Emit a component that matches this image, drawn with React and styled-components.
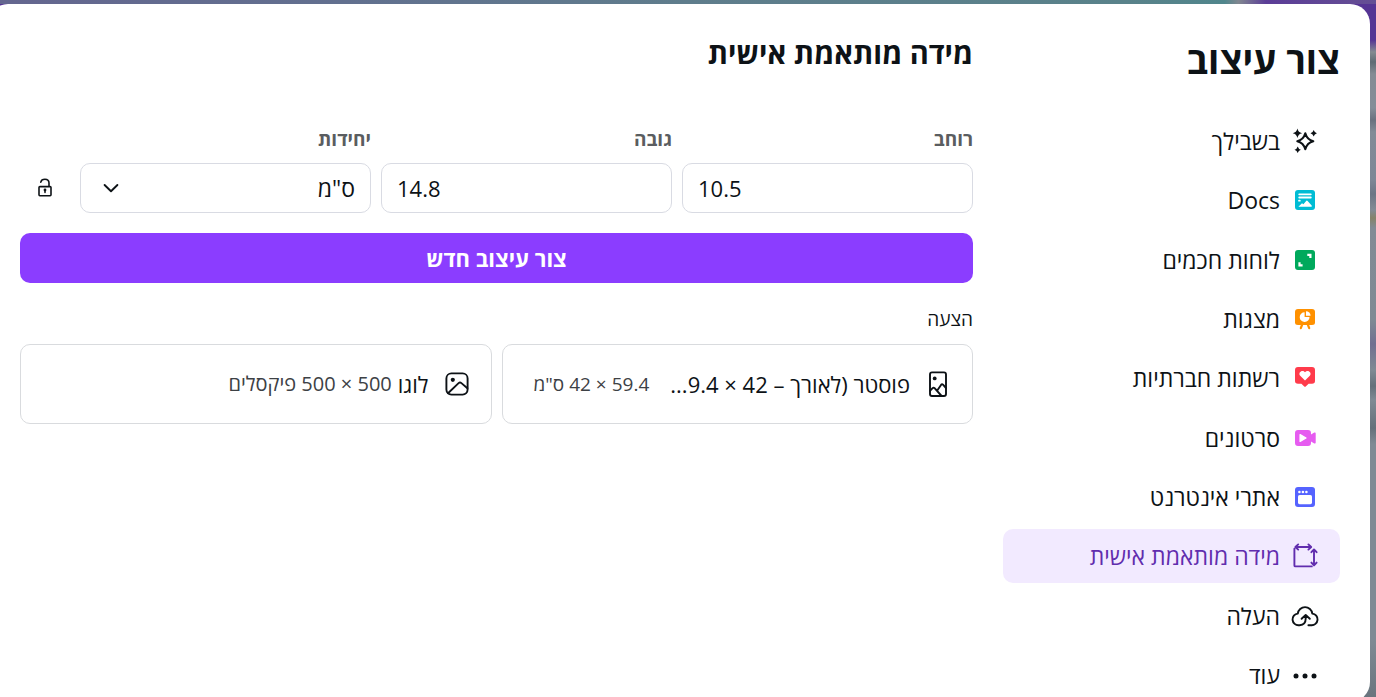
import React, { useState } from 'react';
import styled, { createGlobalStyle } from 'styled-components';

const GlobalStyle = createGlobalStyle`
  *, *::before, *::after {
    box-sizing: border-box;
  }

  body {
    margin: 0;
    overflow: hidden;
    color: #0d1216;
    font-family: 'Open Sans', 'Noto Sans', sans-serif;
    font-size: 22px;
    line-height: 30px;
  }

  button, input, select {
    color: inherit;
    font: inherit;
  }
`;

const Backdrop = styled.div`
  min-height: 100vh;
  padding: 4px 6px 0 0;
  background:
    linear-gradient(90deg, #64668f 0%, #62708f 25%, #5f7d8c 50%, #59828a 82%, #50868c 89%, #808790 90%, #5b3d97 92%, #654f94 100%) top / 100% 4px no-repeat,
    linear-gradient(180deg, #553494 0, #553494 40px, #848b91 52px, #5f6b74 62px, #848b94 74px, #848d98 108px, #69717f 120px, #828b97 132px, #7d8796 180px, #6c7585 194px, #828b95 210px, #85836a 218px, #828b95 228px, #7f8a94 320px, #716f90 344px, #7f8a94 370px, #64707a 386px, #7f8a94 400px, #64707a 428px, #7f8a94 444px, #7f8a94 640px, #69757e 697px);
`;

const Panel = styled.div`
  display: flex;
  gap: 30px;
  min-height: calc(100vh + 1px);
  margin-left: -12px;
  padding: 0 30px 0 32px;
  border-radius: 20px;
  background: white;
`;

const Sidebar = styled.aside`
  display: flex;
  flex: 0 0 337px;
  flex-direction: column;
`;

const PageTitle = styled.h1`
  margin: 32px 0 30px;
  font-size: 37px;
  font-weight: 700;
  line-height: 48px;
`;

const Nav = styled.nav`
  display: flex;
  flex: 1;
  flex-direction: column;
  justify-content: space-between;
`;

const NavItem = styled.a`
  display: flex;
  align-items: center;
  gap: 10px;
  height: 54px;
  padding: 0 20px;
  border-radius: 10px;
  background: ${props => props.$active ? '#f2eaff' : 'transparent'};
  color: ${props => props.$active ? '#612dae' : 'inherit'};
  font-size: 23px;
  text-decoration: none;
`;

const Main = styled.main`
  flex: 1;
  min-width: 0;
`;

const SectionTitle = styled.h2`
  margin: 30px 0 53px;
  font-size: 29px;
  font-weight: 700;
  line-height: 38px;
`;

const SizeForm = styled.form`
  display: grid;
  grid-template-columns: 1fr 1fr 1fr 50px;
  align-items: end;
  gap: 20px 10px;
`;

const Field = styled.div`
  display: flex;
  flex-direction: column;
  gap: 10px;
`;

const Label = styled.label`
  color: #5a5d60;
  font-size: 19px;
  font-weight: 700;
  line-height: 28px;
`;

const Input = styled.input`
  width: 100%;
  height: 50px;
  padding: 0 15px;
  border: 1px solid #d9dbe3;
  border-radius: 10px;
  background: white;
`;

const SelectWrap = styled.div`
  position: relative;

  svg {
    position: absolute;
    top: 15px;
    left: 21px;
    pointer-events: none;
  }
`;

const Select = styled(Input).attrs({ as: 'select' })`
  display: block;
  appearance: none;
  font-size: 23px;
`;

const LockButton = styled.button`
  display: flex;
  align-items: center;
  justify-content: center;
  height: 50px;
  padding: 0;
  border: 0;
  background: none;
`;

const SubmitButton = styled.button`
  grid-column: 1 / -1;
  height: 50px;
  border: 0;
  border-radius: 10px;
  background: #8b3dff;
  color: white;
  font-weight: 700;
`;

const SuggestTitle = styled.h3`
  margin: 22px 0 11px;
  font-size: 19px;
  font-weight: 400;
  line-height: 28px;
`;

const Cards = styled.div`
  display: grid;
  grid-template-columns: 1fr 1fr;
  gap: 10px;
`;

const Card = styled.button`
  display: flex;
  align-items: center;
  gap: 6px;
  min-width: 0;
  height: 80px;
  padding: 0 20px 0 31px;
  border: 1px solid #d9dbde;
  border-radius: 10px;
  background: white;
  white-space: nowrap;

  svg {
    flex: none;
    margin-left: 8px;
  }
`;

const CardName = styled.span`
  flex: ${props => props.$long ? '1' : 'none'};
  text-align: right;
`;

const CardSize = styled.span`
  color: #3d4145;
  font-size: ${props => props.$long ? '19px' : '20px'};
`;

const Icon = ({ size = 30, children }) => (
    <svg width={size} height={size} viewBox={`0 0 ${size} ${size}`} fill="none" stroke="currentColor" strokeWidth="1.9" strokeLinecap="round" strokeLinejoin="round" aria-hidden="true">
        {children}
    </svg>
);

const icons = {
    sparkles: (
        <Icon>
            <path d="M15.3 7.3Q17 13.6 23.3 15.3Q17 17 15.3 23.3Q13.6 17 7.3 15.3Q13.6 13.6 15.3 7.3Z" strokeWidth="2.1" />
            <g fill="currentColor" stroke="none">
                <path d="M7.4 2.6Q8.2 6.5 12.1 7.3Q8.2 8.1 7.4 12Q6.6 8.1 2.7 7.3Q6.6 6.5 7.4 2.6Z" />
                <path d="M23.7 4.1Q24.4 6.6 26.9 7.3Q24.4 8 23.7 10.5Q23 8 20.5 7.3Q23 6.6 23.7 4.1Z" />
                <path d="M7.7 20.5Q8.4 23 10.9 23.7Q8.4 24.4 7.7 26.9Q7 24.4 4.5 23.7Q7 23 7.7 20.5Z" />
            </g>
        </Icon>
    ),
    docs: (
        <Icon>
            <rect x="5" y="5" width="20" height="20" rx="3" fill="#00bcd4" stroke="none" />
            <path d="M9.2 9.3H20.8M9.2 12.5H20.8M9 15.7H9.8" stroke="white" strokeWidth="1.8" />
            <path d="M8.4 21.8L12 18.3L13.4 19.2L16.4 15.8Q17 15.3 17.6 15.9L21.7 20.4V21.8Z" fill="white" stroke="none" />
        </Icon>
    ),
    whiteboard: (
        <Icon>
            <rect x="5" y="5" width="20" height="20" rx="3" fill="#00a95c" stroke="none" />
            <path d="M17.3 9.8H20.4V12.9M9.5 17.3V20.4H12.6" stroke="white" strokeWidth="2.2" strokeLinecap="butt" strokeLinejoin="miter" />
        </Icon>
    ),
    presentation: (
        <Icon>
            <path d="M8 5H22Q25 5 25 8V18.5Q25 21 22 21H8Q5 21 5 18.5V8Q5 5 8 5Z" fill="#ff9100" stroke="none" />
            <path d="M12.2 20.5L10.8 24.2M17.8 20.5L19.2 24.2" stroke="#ff9100" strokeWidth="2.2" />
            <path d="M14.6 8.2V13H19.5A4.9 4.9 0 1 1 14.6 8.2Z" fill="white" stroke="none" />
            <path d="M16 7.2A4.6 4.6 0 0 1 20.6 11.7H16Z" fill="white" stroke="none" />
        </Icon>
    ),
    social: (
        <Icon>
            <path d="M8 4H22Q25 4 25 7V18Q25 20.7 22 20.7H18.6L16 23.3Q15 24.3 14 23.3L11.4 20.7H8Q5 20.7 5 18V7Q5 4 8 4Z" fill="#ff3b4b" stroke="none" />
            <path d="M15 17.5L10.2 12.8C7.6 9.8 12.2 5.9 15 9.2C17.8 5.9 22.4 9.8 19.8 12.8Z" fill="white" stroke="none" />
        </Icon>
    ),
    video: (
        <Icon>
            <path d="M8 7H18Q21 7 21 10V11.4L24.3 9.6Q25.7 9 25.7 10.4V19.6Q25.7 21 24.3 20.4L21 18.6V20Q21 23 18 23H8Q5 23 5 20V10Q5 7 8 7Z" fill="#e65cf0" stroke="none" />
            <path d="M10.1 11.6V18.4L16 15Z" fill="white" stroke="white" strokeWidth="1.3" />
        </Icon>
    ),
    website: (
        <Icon>
            <rect x="5" y="5" width="20" height="20" rx="3" fill="#5563ff" stroke="none" />
            <rect x="8" y="13" width="14" height="9.2" rx="1.6" fill="white" stroke="none" />
            <g fill="white" stroke="none">
                <circle cx="9.4" cy="10" r="1.3" />
                <circle cx="12.9" cy="10" r="1.3" />
                <circle cx="16.4" cy="10" r="1.3" />
            </g>
        </Icon>
    ),
    resize: (
        <Icon>
            <path d="M4.4 7.8V24.4Q4.4 25.4 5.4 25.4H21.8M5.6 6H21M8.2 3.4L5.4 6L8.2 8.6M18.4 3.4L21.2 6L18.4 8.6M24 8.6V24M21.4 11.2L24 8.4L26.6 11.2M21.4 21.6L24 24.4L26.6 21.6" />
        </Icon>
    ),
    upload: (
        <Icon>
            <path d="M18.4 24.2H21.2A5.8 5.8 0 0 0 22.3 12.6A7.3 7.3 0 0 0 7.8 12.6A5.8 5.8 0 0 0 8.9 24.2H9.6Q15.7 24 15.7 17.6V14.2M11.6 17.8L15.7 13.9L19.8 17.8" />
        </Icon>
    ),
    more: (
        <Icon>
            <g fill="currentColor" stroke="none">
                <circle cx="6" cy="16" r="2.5" />
                <circle cx="15" cy="16" r="2.5" />
                <circle cx="24" cy="16" r="2.5" />
            </g>
        </Icon>
    ),
    poster: (
        <Icon size={28}>
            <rect x="6" y="2.4" width="16" height="23.6" rx="2" />
            <circle cx="10.7" cy="8.4" r="1.9" fill="currentColor" stroke="none" />
            <path d="M6 20.8L8.6 18.1Q9.6 17.2 10.6 18.1L17.6 26M13.4 20.2L17.2 14.7Q18 13.7 19 14.7L22 18" />
        </Icon>
    ),
    image: (
        <Icon size={28}>
            <rect x="3.4" y="3.4" width="21.2" height="21.2" rx="5" />
            <circle cx="9.8" cy="9.8" r="2.1" fill="currentColor" stroke="none" />
            <path d="M5 23.2L15.6 13.1Q17 11.9 18.4 13.1L24.4 18.2" />
        </Icon>
    ),
};

const navItems = [
    { icon: 'sparkles', text: 'בשבילך' },
    { icon: 'docs', text: 'Docs' },
    { icon: 'whiteboard', text: 'לוחות חכמים' },
    { icon: 'presentation', text: 'מצגות' },
    { icon: 'social', text: 'רשתות חברתיות' },
    { icon: 'video', text: 'סרטונים' },
    { icon: 'website', text: 'אתרי אינטרנט' },
    { icon: 'resize', text: 'מידה מותאמת אישית' },
    { icon: 'upload', text: 'העלה' },
    { icon: 'more', text: 'עוד' },
];

const suggestions = [
    { icon: 'poster', name: 'פוסטר (לאורך – 42 × 9.4...', size: '59.4 × 42 ס"מ', long: true },
    { icon: 'image', name: 'לוגו', size: '500 × 500 פיקסלים' },
];

const App = () => {
    const [active, setActive] = useState('resize');
    const [width, setWidth] = useState('10.5');
    const [height, setHeight] = useState('14.8');

    return (
        <Backdrop dir="rtl" lang="he">
            <GlobalStyle />
            <Panel>
                <Sidebar>
                    <PageTitle>צור עיצוב</PageTitle>
                    <Nav>
                        {navItems.map(item => (
                            <NavItem key={item.icon} href={`#${item.icon}`} $active={item.icon === active} onClick={() => setActive(item.icon)}>
                                {icons[item.icon]}
                                <span>{item.text}</span>
                            </NavItem>
                        ))}
                    </Nav>
                </Sidebar>
                <Main>
                    <SectionTitle>מידה מותאמת אישית</SectionTitle>
                    <SizeForm onSubmit={e => e.preventDefault()}>
                        <Field>
                            <Label htmlFor="width">רוחב</Label>
                            <Input id="width" dir="ltr" inputMode="decimal" value={width} onChange={e => setWidth(e.target.value)} />
                        </Field>
                        <Field>
                            <Label htmlFor="height">גובה</Label>
                            <Input id="height" dir="ltr" inputMode="decimal" value={height} onChange={e => setHeight(e.target.value)} />
                        </Field>
                        <Field>
                            <Label htmlFor="units">יחידות</Label>
                            <SelectWrap>
                                <Select id="units">
                                    <option>ס"מ</option>
                                </Select>
                                <Icon size={20}><path d="M3.6 7L10 13.2L16.4 7" /></Icon>
                            </SelectWrap>
                        </Field>
                        <LockButton type="button">
                            <Icon size={20}>
                                <path d="M4.9 8.6H15.1Q16 8.6 16 9.5V16.8Q16 17.7 15.1 17.7H4.9Q4 17.7 4 16.8V9.5Q4 8.6 4.9 8.6ZM14 8.4V5Q14 1.3 9.9 1.3Q6.4 1.3 5.8 4.1" strokeWidth="1.6" />
                                <path d="M10 12V14.5" strokeWidth="1.5" />
                                <circle cx="10" cy="12" r="1.4" fill="currentColor" stroke="none" />
                            </Icon>
                        </LockButton>
                        <SubmitButton type="submit">צור עיצוב חדש</SubmitButton>
                    </SizeForm>
                    <SuggestTitle>הצעה</SuggestTitle>
                    <Cards>
                        {suggestions.map(item => (
                            <Card key={item.icon} type="button">
                                {icons[item.icon]}
                                <CardName $long={item.long}>{item.name}</CardName>
                                <CardSize $long={item.long}>{item.size}</CardSize>
                            </Card>
                        ))}
                    </Cards>
                </Main>
            </Panel>
        </Backdrop>
    );
};

export default App;
